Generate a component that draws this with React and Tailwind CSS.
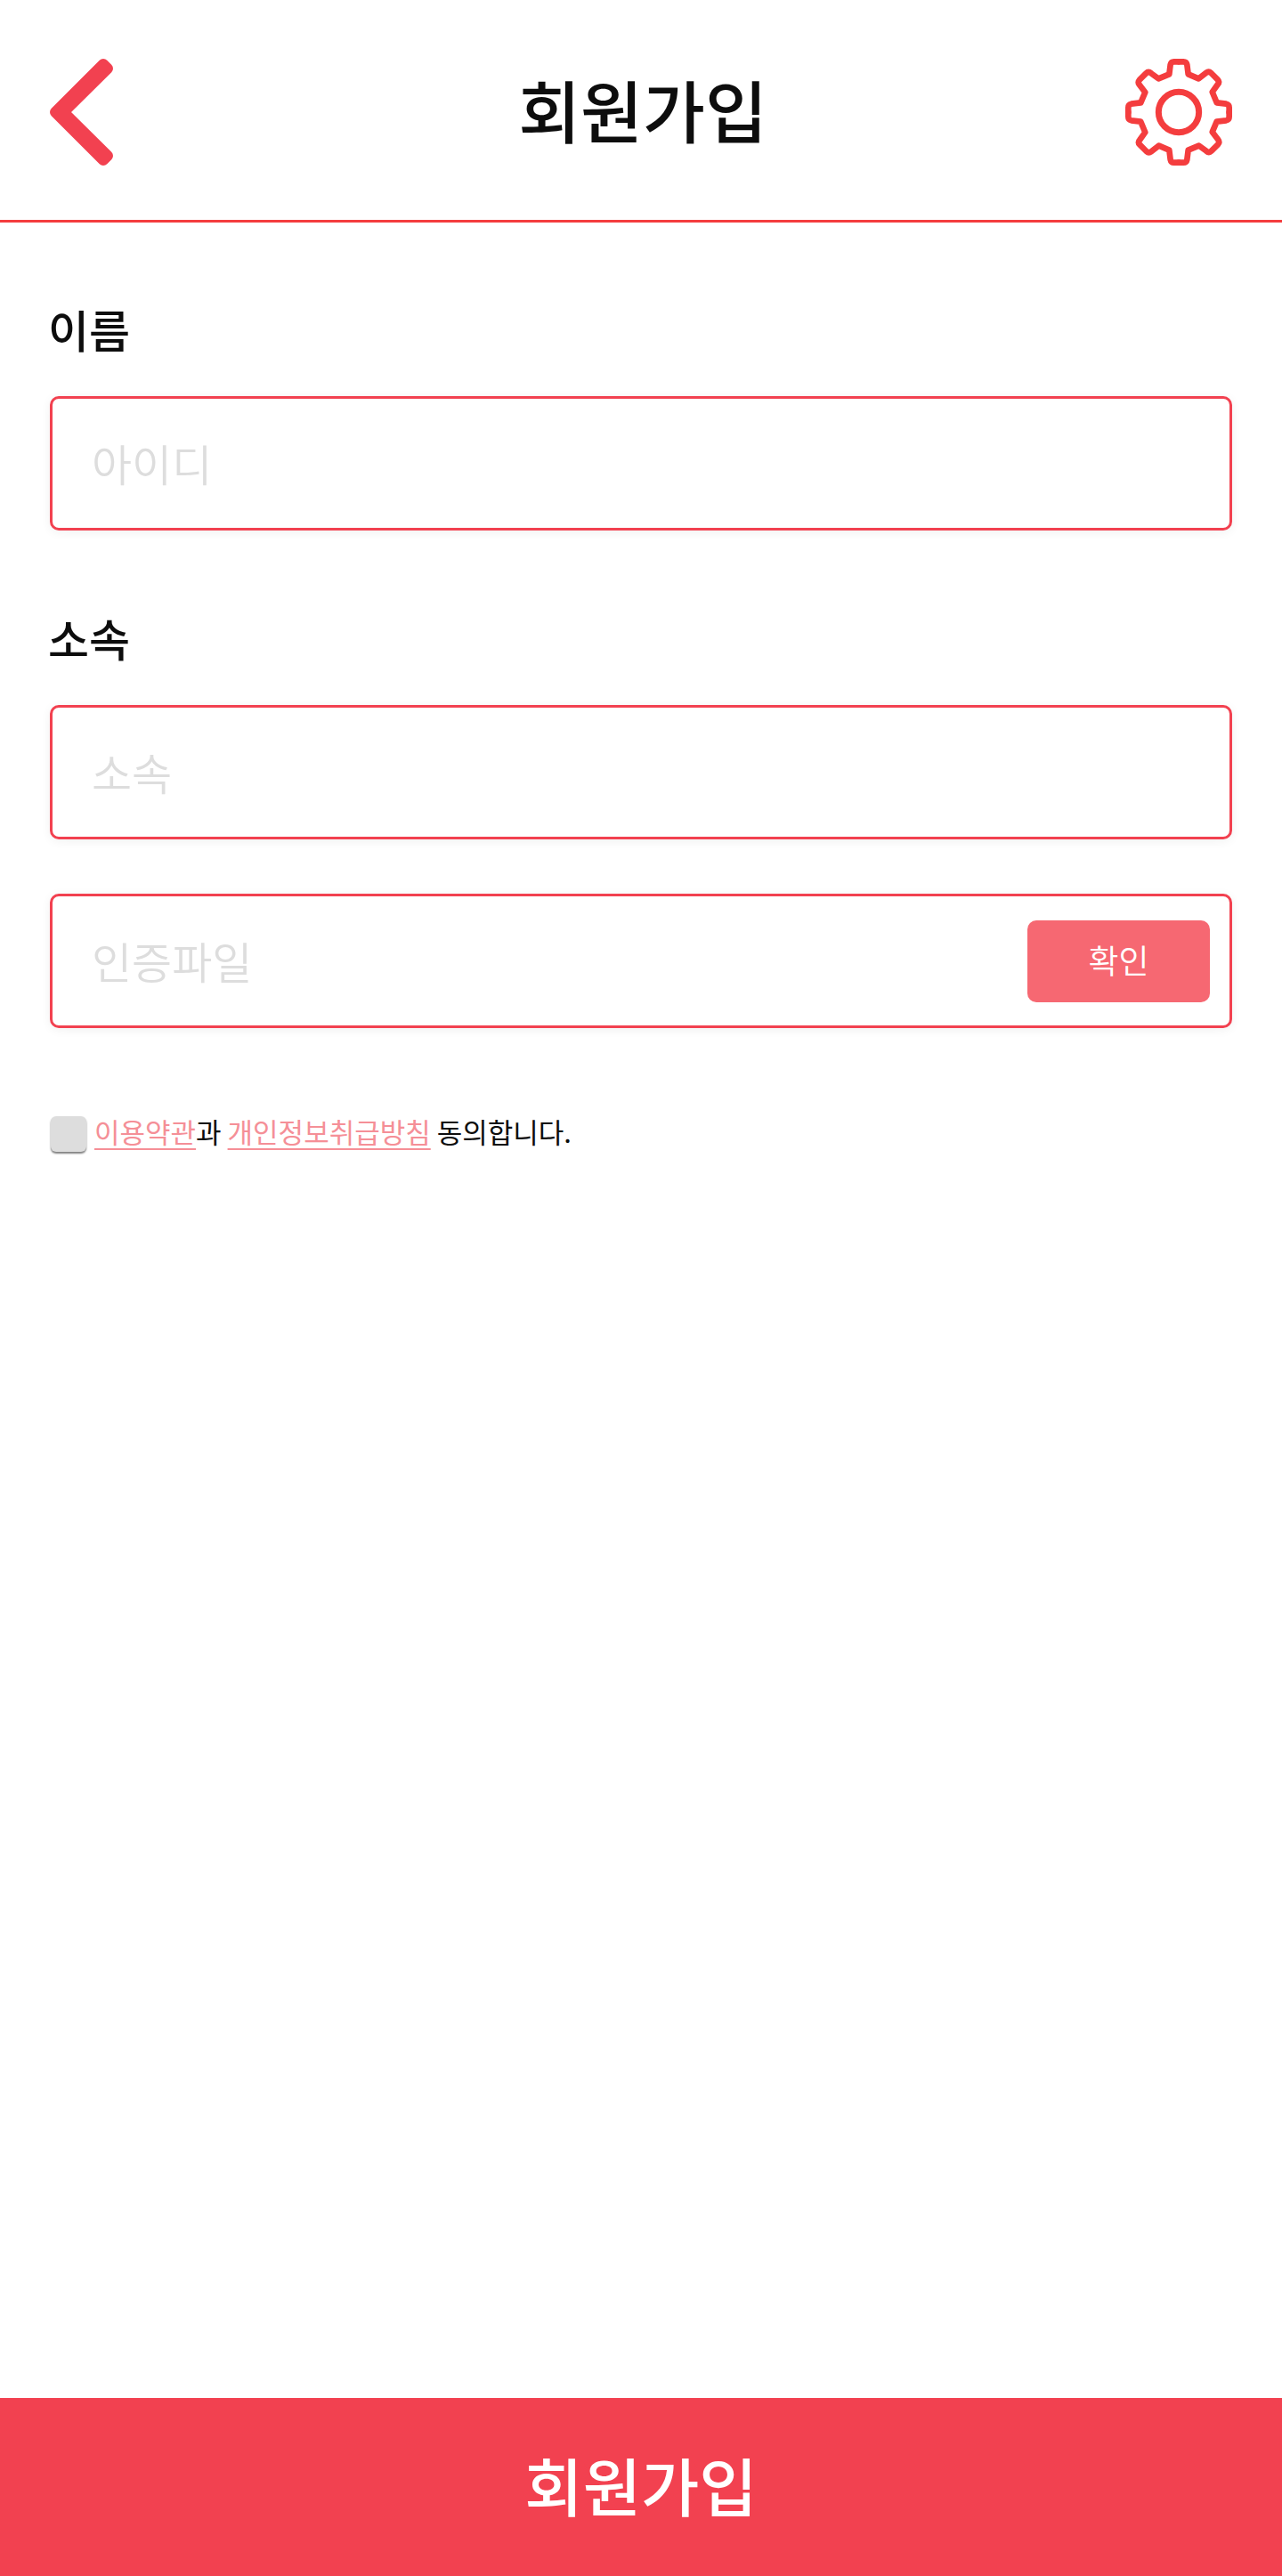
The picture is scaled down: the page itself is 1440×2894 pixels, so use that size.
import React from "react";

const INK = "text-[#0d0d0d]";
const FIELD =
  "flex h-[151px] items-center rounded-[10px] border-3 border-[#f24150] bg-white shadow-[0_2px_12px_rgba(0,0,0,0.06)]";
const INPUT =
  "h-full w-full min-w-0 flex-1 bg-transparent pb-0.5 pl-11 text-[49px] font-[350] text-[#0d0d0d] outline-none placeholder:text-[#dddddd]";
const LABEL = "-ml-0.5 block text-[50px] leading-[72px] font-medium";
const LINK =
  "text-[#f58f97] underline decoration-2 underline-offset-[6px] [text-decoration-skip-ink:none]";

function BackIcon() {
  return (
    <svg viewBox="0 0 71 120" className="h-[120px] w-[71px]" aria-hidden="true">
      <path
        d="M6 60 60 6 65 11 15.5 60 65 109 60 114Z"
        fill="#f24150"
        stroke="#f24150"
        strokeWidth="12"
        strokeLinejoin="round"
      />
    </svg>
  );
}

function GearIcon() {
  const quarter =
    "M-170 0V-16Q-170-26-160-28L-128-32-113-67-133-93Q-139-101-132-109L-110-131Q-102-139-93-131L-68-113-32-128-28-160Q-26-170-16-170H0";
  return (
    <svg
      viewBox="-180 -180 360 360"
      className="size-[120px]"
      fill="none"
      stroke="#f43d3e"
      strokeWidth="20"
      strokeLinecap="round"
      strokeLinejoin="round"
      aria-hidden="true"
    >
      <path d={quarter} />
      <path d={quarter} transform="rotate(90)" />
      <path d={quarter} transform="rotate(180)" />
      <path d={quarter} transform="rotate(270)" />
      <circle r="68" strokeWidth="21" />
    </svg>
  );
}

export default function App() {
  return (
    <div
      className={`flex min-h-screen flex-col bg-white font-["Noto_Sans_CJK_KR",sans-serif] ${INK}`}
    >
      <header className="grid h-[250px] grid-cols-[71px_1fr_71px] items-center border-b-3 border-[#f43d3e] px-14 pt-1">
        <button type="button" aria-label="뒤로" className="justify-self-start">
          <BackIcon />
        </button>
        <h1 className="pb-2 pl-1 text-center text-[76px] leading-[100px] font-medium">회원가입</h1>
        <button type="button" aria-label="설정" className="justify-self-end">
          <GearIcon />
        </button>
      </header>

      <form id="signup" className="flex-1 px-14 pt-[83px]">
        <label htmlFor="name" className={LABEL}>
          이름
        </label>
        <div className={`mt-10 ${FIELD}`}>
          <input id="name" type="text" placeholder="아이디" className={INPUT} />
        </div>

        <label htmlFor="org" className={`mt-[84px] ${LABEL}`}>
          소속
        </label>
        <div className={`mt-10 ${FIELD}`}>
          <input id="org" type="text" placeholder="소속" className={INPUT} />
        </div>

        <div className={`mt-[61px] pr-[22px] ${FIELD}`}>
          <input type="text" aria-label="인증파일" placeholder="인증파일" className={INPUT} />
          <button
            type="button"
            className="h-[92px] w-[205px] shrink-0 rounded-[10px] bg-[#f66872] pb-0.5 text-[37px] font-[350] text-white"
          >
            확인
          </button>
        </div>

        <div className="mt-24 flex items-start gap-2 text-[31px] leading-10">
          <input
            id="agree"
            type="checkbox"
            aria-label="약관 동의"
            className="mx-px mt-[3px] size-10 appearance-none rounded-md bg-[#dddddd] shadow-[0_2px_2px_rgba(0,0,0,0.5)] checked:bg-[#f24150]"
          />
          <p className="font-normal">
            <a href="#terms" className={LINK}>이용약관</a>과{" "}
            <a href="#privacy" className={LINK}>개인정보취급방침</a>{" "}
            동의합니다.
          </p>
        </div>
      </form>

      <button
        type="submit"
        form="signup"
        className="h-[200px] w-full bg-[#f24150] pb-2 text-[71px] font-medium text-white"
      >
        회원가입
      </button>
    </div>
  );
}
